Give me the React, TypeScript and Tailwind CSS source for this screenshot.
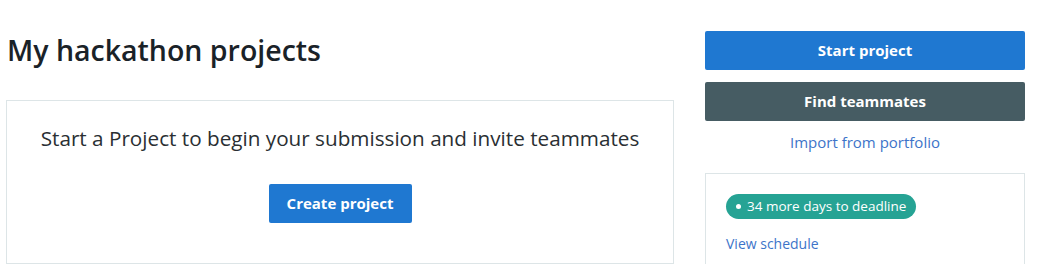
export default function App() {
  return (
    <div className="w-[1038px] h-[264px] overflow-hidden bg-white font-['Open_Sans',sans-serif] text-[#1a2228]">
      <div className="flex pl-[6px] pr-[13px] gap-[31px]">
        {/* Left column */}
        <div className="w-[668px] flex flex-col">
          <h1 className="pl-[1px] pt-[31px] h-[100px] text-[28.5px] font-semibold leading-[38px]">
            My hackathon projects
          </h1>
          <div className="border border-[#dde5e7] h-[164px] flex flex-col items-center pt-[23px]">
            <p className="text-[20.7px] leading-[28px] text-[#2a2f33]">
              Start a Project to begin your submission and invite teammates
            </p>
            <button className="mt-[32px] w-[143px] h-[39px] rounded-[2px] bg-[#1f78d1] text-white text-[15px] font-bold">
              Create project
            </button>
          </div>
        </div>

        {/* Right column */}
        <div className="w-[320px] flex flex-col pt-[31px]">
          <button className="h-[39px] rounded-[2px] bg-[#1f78d1] text-white text-[15px] font-bold">
            Start project
          </button>
          <button className="mt-[12px] h-[39px] rounded-[2px] bg-[#465c63] text-white text-[15px] font-bold">
            Find teammates
          </button>
          <a className="mt-[11px] text-center text-[15px] leading-[20px] text-[#3d74c9]">
            Import from portfolio
          </a>
          <div className="mt-[21px] border border-[#dde5e7] h-[120px] px-[20px] pt-[20px] flex flex-col items-start">
            <span className="flex items-center gap-[6px] h-[25px] px-[10px] rounded-full bg-[#26a394] text-white text-[13.5px] font-medium">
              <span className="w-[5px] h-[5px] rounded-full bg-white" />
              34 more days to deadline
            </span>
            <div className="mt-[16px] text-[14px] leading-[18px] text-[#3d74c9]">View schedule</div>
          </div>
        </div>
      </div>
    </div>
  );
}
